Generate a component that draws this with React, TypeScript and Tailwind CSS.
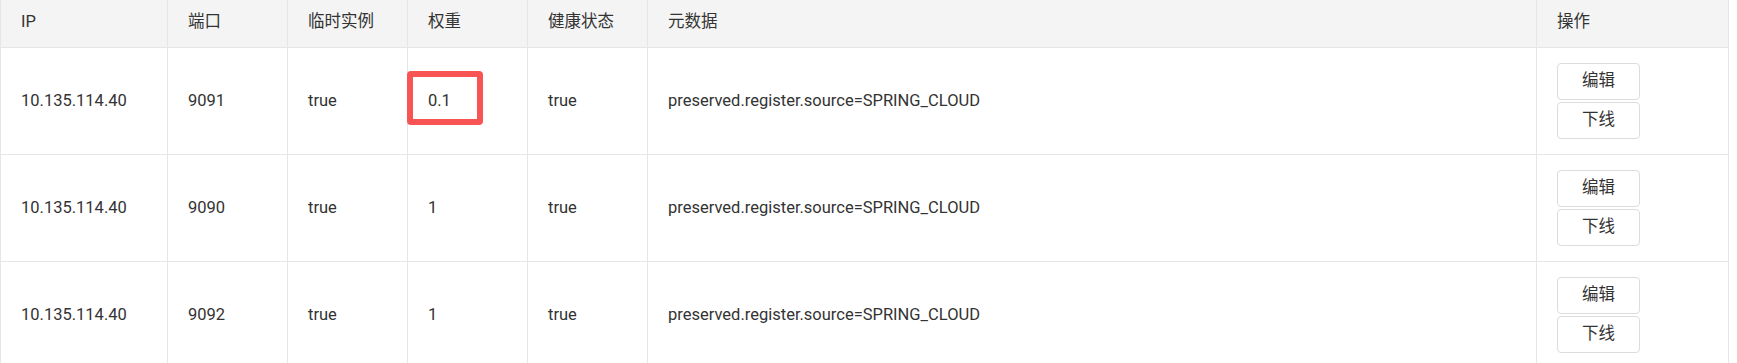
import React from "react";

const rows = [
  { ip: "10.135.114.40", port: "9091", eph: "true", weight: "0.1", health: "true", meta: "preserved.register.source=SPRING_CLOUD", mark: true },
  { ip: "10.135.114.40", port: "9090", eph: "true", weight: "1", health: "true", meta: "preserved.register.source=SPRING_CLOUD", mark: false },
  { ip: "10.135.114.40", port: "9092", eph: "true", weight: "1", health: "true", meta: "preserved.register.source=SPRING_CLOUD", mark: false },
];

const headers = ["IP", "端口", "临时实例", "权重", "健康状态", "元数据", "操作"];

export default function App() {
  return (
    <div
      className="h-[363px] w-[1737px] overflow-hidden bg-white text-[16.5px] text-[#333333]"
      style={{ fontFamily: 'Roboto, "Noto Sans CJK SC", sans-serif' }}
    >
      <div className="grid w-[1729px] grid-cols-[167px_120px_120px_120px_120px_889px_192px] border-l border-[#e6e6e6]">
        {headers.map((h) => (
          <div
            key={h}
            className="flex h-[48px] items-center border-r border-b border-[#e6e6e6] bg-[#f4f4f4] px-5 pb-[3px]"
          >
            {h}
          </div>
        ))}
        {rows.map((r, i) => (
          <React.Fragment key={i}>
            <div className="flex h-[107px] items-center border-r border-b border-[#e6e6e6] px-5">{r.ip}</div>
            <div className="flex h-[107px] items-center border-r border-b border-[#e6e6e6] px-5">{r.port}</div>
            <div className="flex h-[107px] items-center border-r border-b border-[#e6e6e6] px-5">{r.eph}</div>
            <div className="relative flex h-[107px] items-center border-r border-b border-[#e6e6e6] px-5">
              {r.weight}
              {r.mark && (
                <div className="absolute left-[-1px] top-[23px] h-[54px] w-[76px] rounded-[4px] border-[6px] border-[#f85454]" />
              )}
            </div>
            <div className="flex h-[107px] items-center border-r border-b border-[#e6e6e6] px-5">{r.health}</div>
            <div className="flex h-[107px] items-center border-r border-b border-[#e6e6e6] px-5">{r.meta}</div>
            <div className="flex h-[107px] flex-col justify-center gap-[2px] border-r border-b border-[#e6e6e6] px-5">
              <button className="flex h-[37px] w-[83px] items-center justify-center rounded-[4px] border border-[#dcdcdc] bg-white text-[16.5px] text-[#333333]">
                编辑
              </button>
              <button className="flex h-[37px] w-[83px] items-center justify-center rounded-[4px] border border-[#dcdcdc] bg-white text-[16.5px] text-[#333333]">
                下线
              </button>
            </div>
          </React.Fragment>
        ))}
      </div>
    </div>
  );
}
